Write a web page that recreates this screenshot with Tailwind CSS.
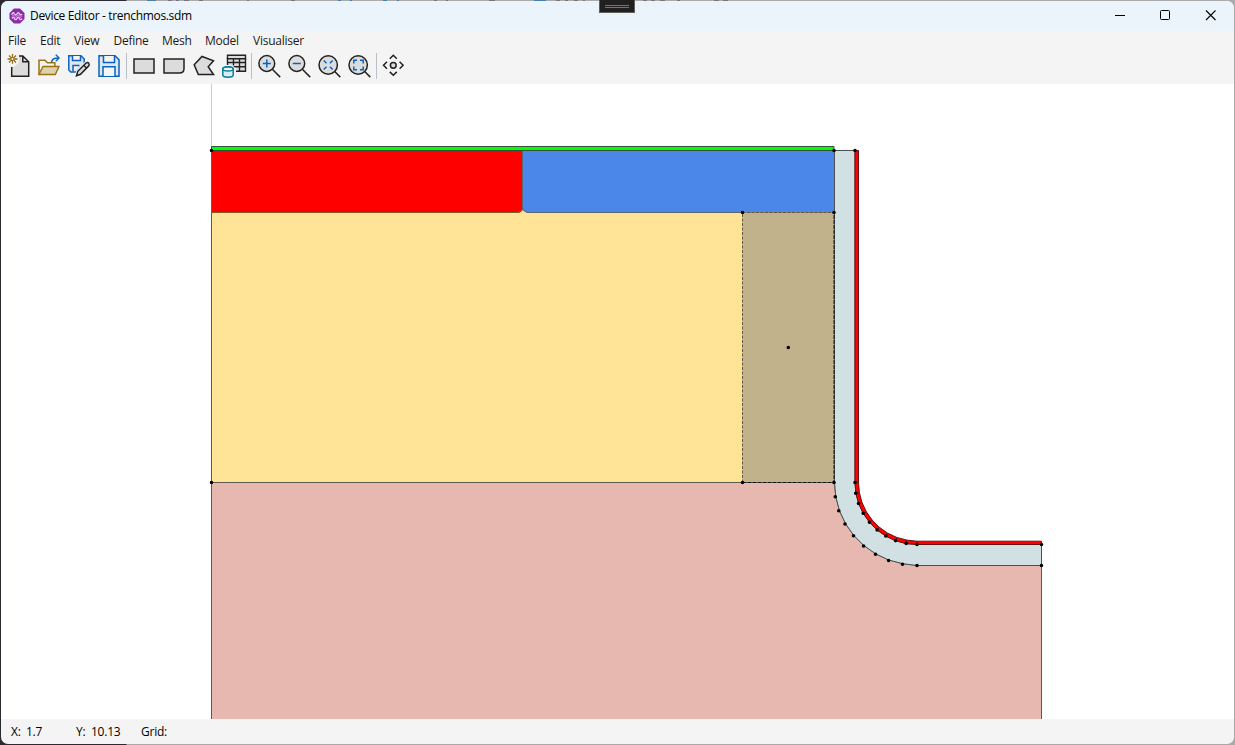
<!DOCTYPE html>
<html lang="en">
<head>
<meta charset="utf-8">
<title>Device Editor - trenchmos.sdm</title>
<script src="https://cdn.jsdelivr.net/npm/@tailwindcss/browser@4"></script>
</head>
<body class="h-[745px] w-[1235px] overflow-hidden bg-[linear-gradient(90deg,#2c2930_0,#2c2930_126px,#aaa_127px)] p-px font-['Open_Sans','Noto_Sans',sans-serif] text-[12px] text-[#1b1b1b]">
<svg class="absolute left-0 top-0 h-px w-[1235px]" viewBox="0 0 1235 1" fill="none">
  <path d="M147 .5h9M338 .5h3M350 .5h2M383 .5h4M397 .5h2M534 .5h12" stroke="#4a7da8"/>
  <path d="M168 .5h4M176 .5h3M184 .5h5M199 .5h4M247 .5h2M291 .5h4M434 .5h3M446 .5h2M489 .5h6M556 .5h4M565 .5h3M574 .5h4M583 .5h2M643 .5h4M651 .5h4M660 .5h5M677 .5h3M714 .5h5M723 .5h5" stroke="#77777b"/>
</svg>
<div class="flex h-[743px] w-[1233px] flex-col overflow-hidden rounded-[7px] bg-[#f4f4f4]">
  <header class="flex h-[30px] shrink-0 items-center bg-[#ebf4fa] pl-2">
    <svg class="size-4 shrink-0" viewBox="0 0 16 16" fill="none">
      <path d="M5 .5h6L15.500 5v6L11 15.500H5L.5 11V5z" fill="#8e2ba8"/>
      <path d="M3 6.800V6q1.300-2.800 2.500 0 1.200 2 2.500 0 1.300-2.800 2.500 0 1.200 2 2.500 0" stroke="#f2d8fa" stroke-width="1.300"/>
      <path d="M3 8.300q1.300-2.800 2.500 0 1.200 2 2.500 0 1.300-2.800 2.500 0 1.200 2 2.500 0" stroke="#cf95df" stroke-width=".9"/>
      <path d="M3 10.600q1.300-2.800 2.500 0 1.200 2 2.500 0 1.300-2.800 2.500 0 1.200 2 2.500 0" stroke="#f2d8fa" stroke-width="1.300"/>
    </svg>
    <h1 class="ml-[5px] w-[180px] whitespace-nowrap text-[12px] tracking-[-0.33px] text-black">Device Editor - trenchmos.sdm</h1>
    <div class="ml-auto flex pr-px text-black">
      <svg class="h-[30px] w-[46px]" viewBox="0 0 46 30" fill="none" stroke="currentColor"><path d="M19 14.500h10"/></svg>
      <svg class="h-[30px] w-[45px]" viewBox="0 0 45 30" fill="none" stroke="currentColor"><rect x="18.500" y="9.500" width="9" height="9" rx="1"/></svg>
      <svg class="h-[30px] w-[46px]" viewBox="0 0 46 30" fill="none" stroke="currentColor"><path d="m19 9.500 9.500 9.500m0-9.500L19 19" stroke-width="1.100"/></svg>
    </div>
  </header>

  <nav class="flex h-5 shrink-0 items-center whitespace-nowrap pl-[7px] leading-5 tracking-[-0.25px]">
    <span class="w-8">File</span><span class="w-[34px]">Edit</span><span class="w-[39.500px]">View</span><span class="w-[48.500px]">Define</span><span class="w-[43px]">Mesh</span><span class="w-[48px]">Model</span><span>Visualiser</span>
  </nav>

  <div class="flex h-[33px] shrink-0 items-start">
    <svg class="h-[33px] w-[420px]" viewBox="1 51 420 33" fill="none" stroke-width="1.500">
      <g stroke="#222">
        <path d="M11.700 66.500v9.700h17V62l-5.800-6H19v6l-4 4.500z" fill="#dcdcdc" stroke="none"/>
        <path d="M11.700 67v9.200h17V61.700L22.800 56H19M22.800 56v5.700h6"/>
        <path d="M12.500 54v3.500m0 2.500v3.800M7.500 59h3.700m2.600 0h3.700M9 55.500l2.600 2.600m1.800 1.800L16 62.500M16 55.500l-2.600 2.600m-1.800 1.800L9 62.500" stroke="#966b13" stroke-width="1.300"/>
        <circle cx="12.500" cy="59" r="1.500" stroke="#966b13" stroke-width=".8"/>
      </g>
      <g stroke="#9a7313">
        <path d="M39 74.800V60.200h6l2.500 2.500h7.300v3.500"/>
        <path d="M39 74.500l4-8h16l-3.700 8z" fill="#ddd1ae" stroke-width="1.400"/>
        <path d="M51.500 62.500q0-4.500 7-4.500M55.800 54.800l3.200 3.200-3.200 3.200" stroke="#0b67c2" stroke-width="1.400"/>
      </g>
      <g stroke="#0b62bd">
        <path d="M68.800 55.800H81l3.200 3.200v5l-8 8h-5.400l-2-2z" fill="#dce7f3"/>
        <path d="M72.500 56v4.500h8V56M73 71.500V65.500h6.500" fill="#f4f4f4"/>
        <path d="M76.500 75.700l1.300-4.400 8-8q1.800-1.500 3 0 1 1.500-.3 2.800l-8 8.200z" fill="#dcdcdc" stroke="#f4f4f4" stroke-width="3.500"/>
        <path d="M76.500 75.700l1.300-4.400 8-8q1.800-1.500 3 0 1 1.500-.3 2.800l-8 8.200z" fill="#dcdcdc" stroke="#222"/>
        <path d="M84 65.500l2.500 2.500" stroke="#222"/>
      </g>
      <g stroke="#0b62bd">
        <path d="M99 55.800h16l4 4v16.400H99z" fill="#dce7f3"/>
        <path d="M103.500 56v6.500h11V56M103 76v-9.300h12V76" fill="#f4f4f4"/>
      </g>
      <path d="M126.500 53v26M251.500 53v26M376.500 53v26" stroke="#b9bfc6" stroke-width="1"/>
      <g stroke="#222" fill="#dcdcdc">
        <rect x="134" y="59" width="20" height="14"/>
        <path d="M164 59h20v9.500q0 4.500-4.500 4.500H164z"/>
        <path d="m194.200 64.800 7.800-8.300 11.500 4.300-5.300 6 5.300 7.700h-15.200z"/>
      </g>
      <g>
        <path d="M227 55h18.500v16.200h-9.700v-5.500H227z" fill="#dcdcdc"/>
        <path d="M227.500 55.200h18v3.600h-18z" fill="#dcdcdc" stroke="#222" stroke-width="1.400"/>
        <path d="M227.500 58v7M245.500 58v13.300H236M228 62.500h17.500M230 66.700h15.500M233.500 59v6.500M239.500 59v12" stroke="#222" stroke-width="1.400"/>
        <path d="M222.800 69q0-2.300 5.200-2.300t5.200 2.300v6q0 2.200-5.200 2.200t-5.200-2.200z" fill="#dcecf0" stroke="#f4f4f4" stroke-width="3.500"/>
        <path d="M222.800 69q0-2.300 5.200-2.300t5.200 2.300v6q0 2.200-5.200 2.200t-5.200-2.200z" fill="#dcecf0" stroke="#087d9f"/>
        <ellipse cx="228" cy="69" rx="5.200" ry="2" fill="#f4f4f4" stroke="#087d9f"/>
      </g>
      <g stroke="#222" fill="#dcdcdc">
        <circle cx="266.800" cy="63.500" r="7.900"/><path d="m272.300 69.200 7.900 7.900"/>
        <circle cx="296.800" cy="63.500" r="7.900"/><path d="m302.300 69.200 7.900 7.900"/>
        <circle cx="328.200" cy="65" r="9.200"/><path d="m334.700 71.500 5.600 5.600"/>
        <circle cx="358.200" cy="65" r="9.200"/><path d="m364.700 71.500 5.600 5.600"/>
      </g>
      <g stroke="#0862c5">
        <path d="M262.800 63.500h8M266.800 59.500v8M292.800 63.500h8"/>
        <path d="m323.700 60.500 2.800 2.800m6.200-2.800-2.800 2.800m-6.200 6.200 2.800-2.800m6.200 2.800-2.800-2.800" stroke-width="1.400"/>
        <path d="M353.800 63.500v-3.200h3.200m3 0h3.200v3.200m0 3v3.200H360m-3 0h-3.200v-3.200"/>
      </g>
      <g stroke="#222">
        <circle cx="393.300" cy="65.300" r="2.900" fill="#dcdcdc"/>
        <path d="m389.800 58.700 3.500-3.400 3.500 3.400M389.800 71.900l3.500 3.400 3.500-3.400M387 61.800l-3.500 3.500 3.500 3.500M399.600 61.800l3.500 3.500-3.500 3.500"/>
      </g>
    </svg>
  </div>

  <main class="h-[635px] shrink-0 bg-white">
    <svg class="block h-[635px] w-[1233px]" viewBox="1 84 1233 635" fill="none">
      <path d="M211.500 84v63" stroke="#ccc"/>
      <path d="M211.500 482.500h623L835.800 496.800 839.500 510.700 845.600 523.800 853.800 535.500 864 545.700 875.800 553.900 888.800 560 902.700 563.700 917 565.500H1041.500V730h-830z" fill="#e7b8b0" stroke="#625754"/>
      <path d="M211.500 205.500h623v277h-623z" fill="#ffe498" stroke="#5d594c"/>
      <path d="M211.500 150.500h311.500v57.500l-1 2.500-3 2h-307.500z" fill="#f00" stroke="#805b22"/>
      <path d="M522.500 150.500h312v62h-307.500l-3.500-2-1-2.500z" fill="#4a87e8" stroke="#59646d"/>
      <path d="M211.500 146.500h622.500v4h-622.500z" fill="#0f0" stroke="#34533a"/>
      <path d="M742.500 212.500h91.500v270h-91.500z" fill="#c1b28b"/>
      <path d="M742.500 482.500v-270h91.500" stroke="#5e5744" stroke-dasharray="3 1.500"/>
      <path d="M834.500 150.500H855V482.500L855.900 493.300 858.700 503.700 863.300 513.500 869.500 522.300 877.100 530 886 536.200 895.800 540.800 906.200 543.600 917 544.500H1041.500V565.500H917L902.700 563.700 888.800 560 875.800 553.900 864 545.700 853.800 535.500 845.600 523.800 839.500 510.700 835.800 496.800 834.500 482.500z" fill="#d1e0e3" stroke="#4b5051"/>
      <path d="M742.500 482.500h91.500v-270" stroke="#111" stroke-dasharray="4 1"/>
      <path d="M855 150.500h3.500v332L859.400 492.700 862 502.500 866.300 511.700 872.200 520.100 879.400 527.300 887.700 533.200 897 537.500 906.800 540.100 917 541.200H1041.500v3.300H917L906.200 543.600 895.800 540.800 886 536.200 877.100 530 869.500 522.300 863.300 513.500 858.700 503.700 855.900 493.300 855 482.500z" fill="#f00" stroke="#6b1111"/>
      <path d="M855 482.500h3.500M855.900 493.300l3.500-.6M858.700 503.700l3.300-1.200M863.300 513.500l3-1.800M869.500 522.300l2.700-2.200M877.100 530l2.300-2.700M886 536.200l1.700-3M895.800 540.800l1.200-3.300M906.200 543.600l.6-3.500M917 544.500V541" stroke="#6b1111"/>
      <path d="M211.500 150.500h0M834 150.500h0M855 150.500h0M742.500 212.500h0M834 212.500h0M788.300 347.500h0M211.500 482.500h0M742.500 482.500h0M834 482.500h0M855 482.500h0M855.700 493.300h0M858.500 503.500h0M863.200 513.300h0M869.400 522.300h0M877.100 530h0M885.800 536h0M895.500 540.600h0M906.200 543.400h0M917 544.500h0M1041.500 544.500h0M1041.500 565.500h0M917 565.500h0M902.500 564.200h0M888.600 560.500h0M875.500 554.300h0M863.600 546h0M853.500 535.800h0M845 524h0M838.800 510.800h0M835.300 496.800h0" stroke="#000" stroke-width="3.600" stroke-linecap="round"/>
    </svg>
  </main>

  <footer class="flex flex-1 items-center whitespace-pre pl-[10px] tracking-[-0.25px] text-black">
    <span class="w-[15px]">X:</span><span class="w-[50px]">1.7</span><span class="w-[15px]">Y:</span><span class="w-[50px]">10.13</span><span>Grid:</span>
  </footer>
</div>
<div class="absolute left-[599px] top-0 flex h-[13px] w-[36px] flex-col items-center gap-px border border-t-0 border-[#625f5b] bg-[#202020] pt-[5px]">
  <div class="h-px w-6 bg-[#737373]"></div><div class="h-px w-6 bg-[#737373]"></div>
</div>
</body>
</html>
